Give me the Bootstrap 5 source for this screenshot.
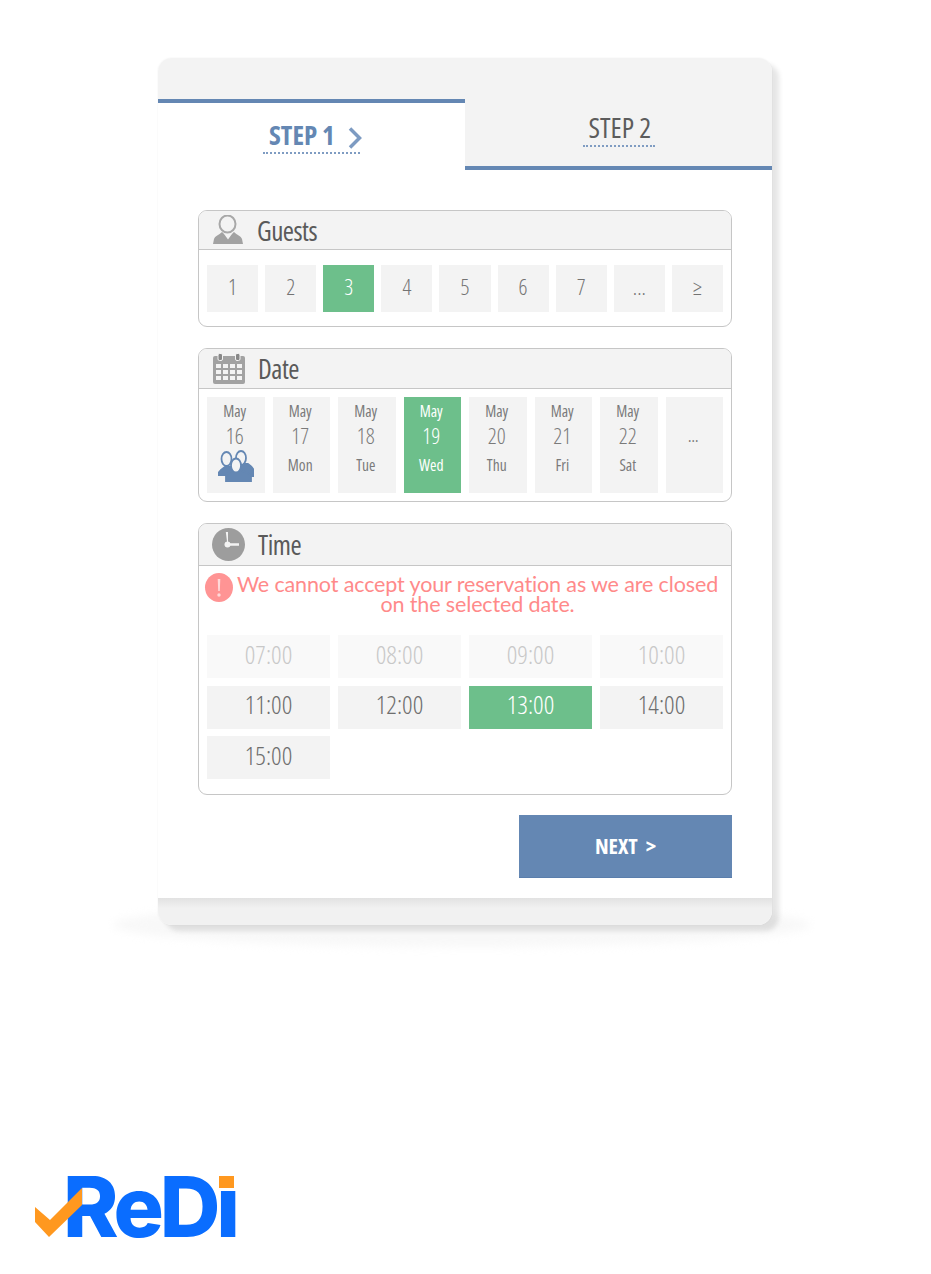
<!DOCTYPE html>
<html lang="en"><head><meta charset="utf-8"><title>Reservation</title>
<link href="https://cdn.jsdelivr.net/npm/bootstrap@5.3.0/dist/css/bootstrap.min.css" rel="stylesheet">
<style>
body{background:#fff;height:1274px;overflow:hidden;font-family:"Open Sans","Liberation Sans",sans-serif;font-stretch:75%;color:#666}
.stage{padding:58px 0 0 158px;width:931px}
.shell{width:614px;height:867px;background:#fff;border-radius:14px;position:relative;box-shadow:7px 6px 5px rgba(0,0,0,.1),0 0 2px rgba(0,0,0,.07)}
.ground{position:absolute;left:-45px;right:-38px;bottom:-22px;height:44px;border-radius:50%;background:#f8f8f8;filter:blur(4px);z-index:-1}
.shell-top{height:41px;background:#f3f3f3;border-radius:14px 14px 0 0}
.tabs{height:71px}
.tab-on{width:307px;border-top:4px solid #6487b3;background:#fff;color:#6487b3;font-weight:700;font-size:27px;padding-top:17px;line-height:29px}
.tab-off{width:307px;background:#f3f3f3;border-bottom:4px solid #6487b3;font-size:28px;padding-top:13px;line-height:30px;color:#5c5c5c}
.tab-label{display:inline-flex;align-items:center;border-bottom:2px dotted #7f9cc2;padding:0 0 4px 6px;height:33px;width:97px;gap:13px;white-space:nowrap}
.tab-label svg{margin-top:7px;flex:none}
.tab-off .tab-label{padding:0 0 5px 6px;height:32px;width:72px}
.content{padding:40px 40px 0 40px}
.panel-box{border:1px solid #c6c6c6;border-radius:9px;overflow:hidden;margin-bottom:21px}
.panel-box.is-last{margin-bottom:20px}
.panel-head{height:39px;background:#f3f3f3;border-bottom:1px solid #c6c6c6;font-size:27px;letter-spacing:-.5px;color:#5a5a5a;line-height:1;padding-left:14px;gap:14px}
.head-date{height:40px;gap:13px}
.head-time{height:42px;padding-left:13px;gap:13px}
.guest-grid{display:grid;grid-template-columns:repeat(9,1fr);gap:7px;padding:15px 8px 14px}
.guest-cell{height:47px;background:#f3f3f3;font-size:22px;font-weight:350;color:#737373;padding-bottom:4px}
.date-grid{display:grid;grid-template-columns:repeat(8,1fr);gap:8px;padding:8px}
.date-cell{height:96px;background:#f3f3f3;color:#7a7a7a;padding:4px 2px 0 0;line-height:20px;text-align:center;font-size:15.500px;font-weight:400}
.date-num{font-size:22px;font-weight:350;margin:2px 0 8px;line-height:24px;display:block}
.date-more{padding-bottom:22px}
.time-grid{display:grid;grid-template-columns:repeat(4,1fr);gap:7.500px 8px;padding:0 8px 15px}
.time-cell{height:43px;background:#f3f3f3;font-size:26px;font-weight:350;color:#6e6e6e;padding-bottom:5px}
.time-cell.off{background:#f9f9f9;color:#c8c8c8}
.is-on{background:#6dbf8b!important;color:#fff!important}
.alert-line{font-family:Lato,sans-serif;font-stretch:100%;font-size:21.500px;font-weight:400;line-height:20px;color:#ff8a8a;letter-spacing:-.13px;text-align:center;padding:8px 10px 21px 35px;position:relative}
.alert-dot{position:absolute;left:6px;top:7px;width:28px;height:29px;border-radius:50%;background:#ff9494;display:flex;align-items:center;justify-content:center}
.next-btn{width:213px;height:63px;background:#6487b3;color:#fff;font-weight:700;font-stretch:75%;font-size:22px;border-radius:0;border:0;border-bottom:1px solid #5a7eac;line-height:1;padding:0 0 3px 0}
.shell-foot{position:absolute;left:0;right:0;bottom:0;height:27px;background:linear-gradient(#e2e2e2,#f1f1f1 10px);border-radius:0 0 14px 14px}
.brand{position:absolute;left:63px;top:1157px;font-family:Inter,"Liberation Sans",sans-serif;font-stretch:100%;font-weight:800;font-size:84px;line-height:100px;color:#0a6dff;letter-spacing:-4.200px}
.brand-tick{position:absolute;left:34px;top:1188px}
.brand-dot{position:absolute;left:214px;top:1165px;width:28px;height:26px;background:#fff}
.brand-dot::after{content:"";position:absolute;left:5px;top:11px;width:15px;height:12px;background:#ff981f}
</style></head><body>
<div class="stage">
<div class="shell">
<div class="ground"></div>
<div class="shell-top"></div>
<div class="tabs d-flex">
<div class="tab-on text-center"><span class="tab-label">STEP 1<svg width="14" height="22" viewBox="0 0 14 22"><path d="M2 1.500l9.500 9.500L2 20.500" fill="none" stroke="#7d9bc2" stroke-width="3.500"/></svg></span></div>
<div class="tab-off text-center"><span class="tab-label">STEP 2</span></div>
</div>
<div class="content">
<section class="panel-box">
<div class="panel-head d-flex align-items-center"><svg width="30" height="30" viewBox="0 0 30 30"><path d="M0 29l1-5c1-3 5-4 8-7l6 5 6-5c3 3 7 4 8 7l1 5z" fill="#a2a2a2"/><path d="M10 17.500l5 7 5-7-5 3z" fill="#f3f3f3"/><ellipse cx="14.500" cy="9" rx="8" ry="8.500" fill="#f3f3f3" stroke="#a8a8a8" stroke-width="2"/></svg><span>Guests</span></div>
<div class="guest-grid">
<div class="guest-cell d-flex align-items-center justify-content-center">1</div><div class="guest-cell d-flex align-items-center justify-content-center">2</div><div class="guest-cell is-on d-flex align-items-center justify-content-center">3</div><div class="guest-cell d-flex align-items-center justify-content-center">4</div><div class="guest-cell d-flex align-items-center justify-content-center">5</div><div class="guest-cell d-flex align-items-center justify-content-center">6</div><div class="guest-cell d-flex align-items-center justify-content-center">7</div><div class="guest-cell d-flex align-items-center justify-content-center">...</div><div class="guest-cell d-flex align-items-center justify-content-center">≥</div>
</div>
</section>
<section class="panel-box">
<div class="panel-head head-date d-flex align-items-center"><svg width="32" height="31" viewBox="0 0 32 31"><rect y="3" width="32" height="28" rx="2" fill="#a2a2a2"/><rect x="5" y="0.500" width="4.500" height="7" rx="1.500" fill="#888" stroke="#f3f3f3"/><rect x="22.500" y="0.500" width="4.500" height="7" rx="1.500" fill="#888" stroke="#f3f3f3"/><g fill="#f3f3f3"><rect x="3" y="11" width="5" height="4"/><rect x="10" y="11" width="5" height="4"/><rect x="17" y="11" width="5" height="4"/><rect x="24" y="11" width="5" height="4"/><rect x="3" y="17" width="5" height="4"/><rect x="10" y="17" width="5" height="4"/><rect x="17" y="17" width="5" height="4"/><rect x="24" y="17" width="5" height="4"/><rect x="3" y="23" width="5" height="4"/><rect x="10" y="23" width="5" height="4"/><rect x="17" y="23" width="5" height="4"/><rect x="24" y="23" width="5" height="4"/></g></svg><span>Date</span></div>
<div class="date-grid">
<div class="date-cell">May<span class="date-num">16</span><svg class="d-block" style="margin:-5px 0 0 11px" width="36" height="32" viewBox="0 0 36 32"><g stroke="#6487b3" stroke-width="1.800"><path d="M0 25c0-4 4-6 7-8h8l8 8z" fill="#6487b3"/><ellipse cx="8.500" cy="9" rx="5" ry="7" fill="#f3f3f3"/><path d="M18 20l4-6h8c3 2 6 4 6 8v4H18z" fill="#6487b3"/><ellipse cx="23" cy="8" rx="5" ry="7" fill="#f3f3f3"/><path d="M8 31v-5c0-3 5-4 6-6h9c1 2 10 3 10 6v5z" fill="#6487b3"/><ellipse cx="18" cy="15.500" rx="5" ry="7" fill="#f3f3f3"/></g></svg></div>
<div class="date-cell">May<span class="date-num">17</span>Mon</div>
<div class="date-cell">May<span class="date-num">18</span>Tue</div>
<div class="date-cell is-on">May<span class="date-num">19</span>Wed</div>
<div class="date-cell">May<span class="date-num">20</span>Thu</div>
<div class="date-cell">May<span class="date-num">21</span>Fri</div>
<div class="date-cell">May<span class="date-num">22</span>Sat</div>
<div class="date-cell date-more d-flex align-items-center justify-content-center">...</div>
</div>
</section>
<section class="panel-box is-last">
<div class="panel-head head-time d-flex align-items-center"><svg width="33" height="33" viewBox="0 0 33 33"><circle cx="16.500" cy="16.500" r="16.500" fill="#9d9d9d"/><path d="M13.800 4h2.200v11.300H27v2.400H15.500" fill="#f3f3f3"/><circle cx="15.500" cy="16.500" r="3" fill="#f3f3f3"/></svg><span>Time</span></div>
<div class="alert-line"><span class="alert-dot"><svg width="6" height="20" viewBox="0 0 6 20"><path d="M1.700 1h2.600l-.5 12H2.200z" fill="#ffd9d9"/><circle cx="3" cy="17" r="1.700" fill="#ffd9d9"/></svg></span>We cannot accept your reservation as we are closed on the selected date.</div>
<div class="time-grid">
<div class="time-cell off d-flex align-items-center justify-content-center">07:00</div><div class="time-cell off d-flex align-items-center justify-content-center">08:00</div><div class="time-cell off d-flex align-items-center justify-content-center">09:00</div><div class="time-cell off d-flex align-items-center justify-content-center">10:00</div>
<div class="time-cell d-flex align-items-center justify-content-center">11:00</div><div class="time-cell d-flex align-items-center justify-content-center">12:00</div><div class="time-cell is-on d-flex align-items-center justify-content-center">13:00</div><div class="time-cell d-flex align-items-center justify-content-center">14:00</div>
<div class="time-cell d-flex align-items-center justify-content-center">15:00</div>
</div>
</section>
<div class="d-flex justify-content-end"><button class="btn next-btn" type="button">NEXT &nbsp;&gt;</button></div>
</div>
<div class="shell-foot"></div>
</div>
</div>
<div class="brand">ReDi</div>
<div class="brand-dot"></div>
<svg class="brand-tick" width="50" height="50" viewBox="0 0 50 50"><path d="M1 19l15 13L48 0v17L15 49 1 34z" fill="#ff981f"/></svg>
<script src="https://cdn.jsdelivr.net/npm/bootstrap@5.3.0/dist/js/bootstrap.bundle.min.js"></script>
</body></html>
